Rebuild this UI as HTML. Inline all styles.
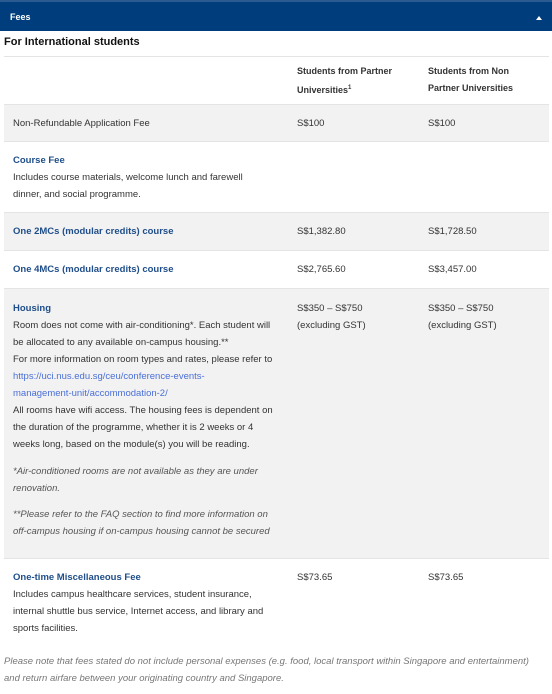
<!DOCTYPE html>
<html><head><meta charset="utf-8"><style>
*{margin:0;padding:0;box-sizing:border-box}
body{width:552px;height:694px;background:#fff;font-family:"Liberation Sans",Arial,sans-serif;font-size:9.5px;color:#333;position:relative;overflow:hidden}
.bar{position:absolute;left:0;top:0;width:552px;height:31px;background:#003d7c;border-top:2px solid #2a5a90}
.bar span{position:absolute;left:10px;top:10px;color:#fff;font-weight:bold;font-size:9px}
.tri{position:absolute;right:10px;top:14px;width:0;height:0;border-left:3px solid transparent;border-right:3px solid transparent;border-bottom:4px solid #fff}
.h{position:absolute;left:4px;top:36px;font-weight:bold;font-size:11px;color:#111}
.row{position:absolute;left:4px;width:545px;border-top:1px solid #e4e4e4}
.g{background:#f2f2f2}
.t{position:absolute;line-height:17px;white-space:nowrap}
.c1{left:9px;width:275px}
.c2{left:293px}
.c3{left:424px}
b.n{color:#1f4e8a}
a{color:#4a6fd8;text-decoration:none}
i{color:#555}
.th{font-weight:bold;color:#333;font-size:9px}
</style></head><body>
<div class="bar"><span>Fees</span><div class="tri"></div></div>
<div class="h">For International students</div>
<div class="row" style="top:56px;height:48px">
 <div class="t c2 th" style="top:6px">Students from Partner<br>Universities<sup style="font-size:6px">1</sup></div>
 <div class="t c3 th" style="top:6px">Students from Non<br>Partner Universities</div>
</div>
<div class="row g" style="top:104px;height:37px">
 <div class="t c1" style="top:10px">Non-Refundable Application Fee</div>
 <div class="t c2" style="top:10px">S$100</div><div class="t c3" style="top:10px">S$100</div>
</div>
<div class="row" style="top:141px;height:71px">
 <div class="t c1" style="top:10px"><b class="n">Course Fee</b><br>Includes course materials, welcome lunch and farewell<br>dinner, and social programme.</div>
</div>
<div class="row g" style="top:212px;height:38px">
 <div class="t c1" style="top:10px"><b class="n">One 2MCs (modular credits) course</b></div>
 <div class="t c2" style="top:10px">S$1,382.80</div><div class="t c3" style="top:10px">S$1,728.50</div>
</div>
<div class="row" style="top:250px;height:38px">
 <div class="t c1" style="top:10px"><b class="n">One 4MCs (modular credits) course</b></div>
 <div class="t c2" style="top:10px">S$2,765.60</div><div class="t c3" style="top:10px">S$3,457.00</div>
</div>
<div class="row g" style="top:288px;height:270px">
 <div class="t c1" style="top:11px"><b class="n">Housing</b><br>Room does not come with air-conditioning*. Each student will<br>be allocated to any available on-campus housing.**<br>For more information on room types and rates, please refer to<br><a>https://uci.nus.edu.sg/ceu/conference-events-<br>management-unit/accommodation-2/</a><br>All rooms have wifi access. The housing fees is dependent on<br>the duration of the programme, whether it is 2 weeks or 4<br>weeks long, based on the module(s) you will be reading.
 <div style="margin-top:10px"><i>*Air-conditioned rooms are not available as they are under<br>renovation.</i></div>
 <div style="margin-top:9px"><i>**Please refer to the FAQ section to find more information on<br>off-campus housing if on-campus housing cannot be secured</i></div></div>
 <div class="t c2" style="top:11px">S$350 – S$750<br>(excluding GST)</div><div class="t c3" style="top:11px">S$350 – S$750<br>(excluding GST)</div>
</div>
<div class="row" style="top:558px;height:87px">
 <div class="t c1" style="top:10px"><b class="n">One-time Miscellaneous Fee</b><br>Includes campus healthcare services, student insurance,<br>internal shuttle bus service, Internet access, and library and<br>sports facilities.</div>
 <div class="t c2" style="top:10px">S$73.65</div><div class="t c3" style="top:10px">S$73.65</div>
</div>
<div class="t" style="left:4px;top:653px;width:548px;color:#777;font-style:italic">Please note that fees stated do not include personal expenses (e.g. food, local transport within Singapore and entertainment)<br>and return airfare between your originating country and Singapore.</div>
</body></html>
